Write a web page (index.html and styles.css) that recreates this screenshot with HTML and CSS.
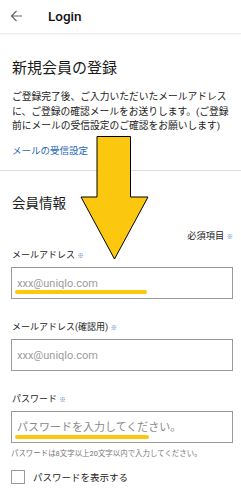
FILE: index.html
```
<!DOCTYPE html>
<html lang="ja">
<head>
<meta charset="utf-8">
<link rel="stylesheet" href="styles.css">
</head>
<body>
<header class="topbar">
  <svg class="back" width="13" height="12" viewBox="0 0 13 12"><path d="M12 6H1.5M6.5 1L1.5 6l5 5" fill="none" stroke="#666" stroke-width="1.2"/></svg>
  <span class="topbar-title">Login</span>
</header>
<section class="intro">
  <h1 class="title">新規会員の登録</h1>
  <p class="lead">ご登録完了後、ご入力いただいたメールアドレスに、ご登録の確認メールをお送りします。(ご登録前にメールの受信設定のご確認をお願いします)</p>
  <a class="link" href="#">メールの受信設定</a>
</section>
<div class="divider"></div>
<section class="form">
  <h2 class="subtitle">会員情報</h2>
  <div class="required">必須項目 <span class="mark">※</span></div>
  <div class="field">
    <div class="label">メールアドレス <span class="mark">※</span></div>
    <div class="box"><input class="input" placeholder="xxx@uniqlo.com"><span class="hl hl-1"></span></div>
  </div>
  <div class="field">
    <div class="label">メールアドレス(確認用) <span class="mark">※</span></div>
    <div class="box"><input class="input" placeholder="xxx@uniqlo.com"></div>
  </div>
  <div class="field">
    <div class="label">パスワード <span class="mark">※</span></div>
    <div class="box"><input class="input input-pw" placeholder="パスワードを入力してください。"><span class="hl hl-2"></span></div>
    <div class="help">パスワードは8文字以上20文字以内で入力してください。</div>
  </div>
  <div class="check">
    <span class="checkbox"></span>
    <span class="check-label">パスワードを表示する</span>
  </div>
</section>
<svg class="arrow" width="241" height="500" viewBox="0 0 241 500">
  <polygon points="97,136.5 130.5,136.5 130.5,197 148,197 114.5,259 81,197 97,197" fill="#FCC80F" stroke="#000" stroke-width="1"/>
</svg>
</body>
</html>
```
FILE: styles.css
```
* { box-sizing: border-box; }
html, body { margin: 0; padding: 0; }
body {
  width: 241px;
  height: 500px;
  overflow: hidden;
  background: #fff;
  color: #222;
  font-family: Roboto, "Noto Sans CJK JP", sans-serif;
  position: relative;
}
.topbar {
  height: 34px;
  display: flex;
  align-items: center;
  padding: 0 0 2px 10px;
  border-bottom: 1px solid #efefef;
  box-shadow: 0 1px 2px rgba(0,0,0,0.05);
}
.back { display: block; }
.topbar-title {
  margin-left: 25px;
  font-size: 13.5px;
  font-weight: 500;
  color: #111;
}
.intro { padding: 0 8px 0 12px; }
.title {
  margin: 24px 0 0;
  font-size: 15px;
  line-height: 20px;
  font-weight: 400;
  color: #1a1a1a;
}
.lead {
  margin: 12px 0 0;
  font-size: 9.75px;
  line-height: 14.5px;
  color: #222;
}
.link {
  display: block;
  margin-top: 10.5px;
  font-size: 9.5px;
  line-height: 14.5px;
  color: #1f67b8;
  text-decoration: none;
}
.divider {
  margin-top: 11.5px;
  height: 1px;
  background: #dedede;
}
.form { padding: 0 8px 0 11px; }
.subtitle {
  margin: 23px 0 0 1px;
  font-size: 13.5px;
  line-height: 18px;
  font-weight: 400;
  color: #1a1a1a;
}
.required {
  margin-top: 17px;
  text-align: right;
  font-size: 9.25px;
  line-height: 14px;
  color: #222;
}
.mark {
  font-size: 6.5px;
  color: #4f86c6;
}
.field { margin-top: 4px; }
.field + .field { margin-top: 21px; }
.label {
  margin-left: 1px;
  font-size: 9px;
  line-height: 14px;
  color: #222;
}
.box {
  position: relative;
  margin-top: 4px;
}
.input {
  display: block;
  width: 222px;
  height: 32px;
  margin: 0;
  padding: 0 5px;
  border: 1px solid #9a9a9a;
  border-radius: 0;
  background: #fff;
  font-family: Roboto, "Noto Sans CJK JP", sans-serif;
  font-size: 11px;
  color: #222;
  outline: none;
}
.input::placeholder { color: #9c9c9c; }
.input-pw { font-size: 11px; }
.input-pw::placeholder { color: #8a8a8a; }
.hl {
  position: absolute;
  left: 4px;
  height: 3.5px;
  border-radius: 2px;
  background: #FCC80F;
}
.hl-1 { top: 23px; width: 132px; }
.hl-2 { top: 24px; width: 134px; }
.help {
  margin-top: 6px;
  font-size: 7.45px;
  line-height: 10px;
  color: #777;
}
.check {
  margin-top: 11px;
  display: flex;
  align-items: center;
  height: 14px;
}
.checkbox {
  width: 14px;
  height: 14px;
  border: 1px solid #9a9a9a;
  background: #fff;
}
.check-label {
  margin-left: 8px;
  font-size: 9.5px;
  color: #222;
}
.arrow {
  position: absolute;
  left: 0;
  top: 0;
  pointer-events: none;
}
```
